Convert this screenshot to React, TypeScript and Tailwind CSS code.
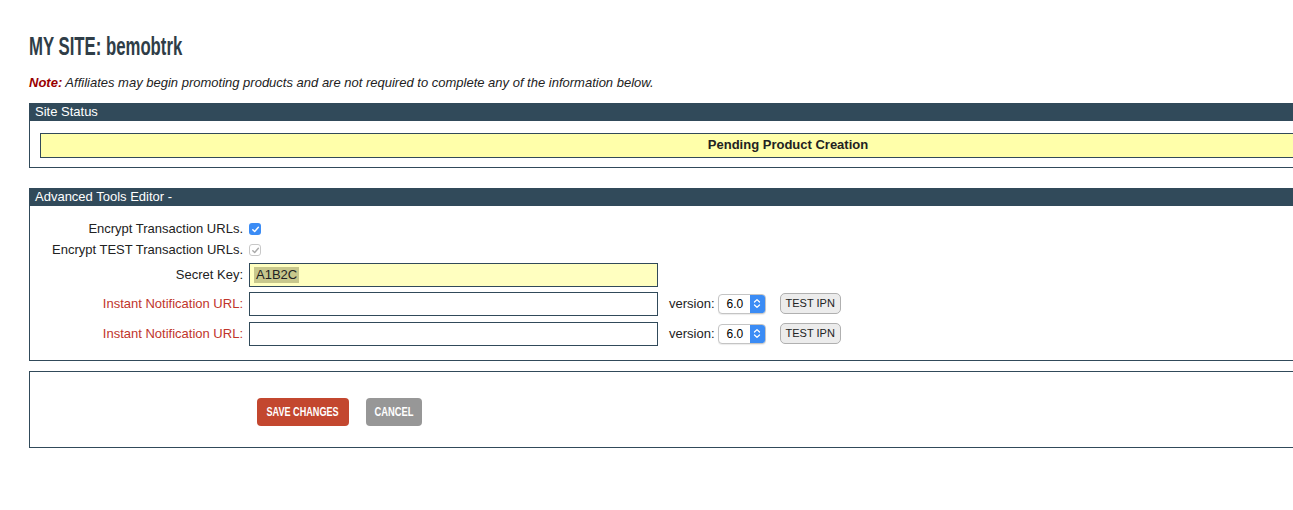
import React from 'react'

const body = { fontFamily: '"Liberation Sans", Arial, Helvetica, sans-serif' }

function Check({ disabled }: { disabled?: boolean }) {
  return (
    <span
      className={
        disabled
          ? 'inline-flex w-[12px] h-[12px] items-center justify-center rounded-[3px] border border-[#c8c8c8] bg-white'
          : 'inline-flex w-[12px] h-[12px] items-center justify-center rounded-[3px] bg-[#3b8cf5]'
      }
    >
      <svg width="9" height="9" viewBox="0 0 10 10" fill="none">
        <path
          d="M2 5.2 L4.1 7.3 L8.2 2.6"
          stroke={disabled ? '#a9a9a9' : '#ffffff'}
          strokeWidth="1.6"
          strokeLinecap="round"
          strokeLinejoin="round"
        />
      </svg>
    </span>
  )
}

function VersionSelect() {
  return (
    <div className="flex items-center h-[20px] w-[48px] rounded-[4px] border border-[#c4c4c4] bg-white shadow-[0_1px_1px_rgba(0,0,0,0.08)] overflow-hidden">
      <span className="flex-1 pl-[8px] text-[12px] text-black">6.0</span>
      <span className="flex items-center justify-center w-[15px] h-full bg-[#3b8cf5]">
        <svg width="8" height="11" viewBox="0 0 8 11" fill="none">
          <path d="M1.5 4 L4 1.6 L6.5 4" stroke="#fff" strokeWidth="1.3" strokeLinecap="round" strokeLinejoin="round" />
          <path d="M1.5 7 L4 9.4 L6.5 7" stroke="#fff" strokeWidth="1.3" strokeLinecap="round" strokeLinejoin="round" />
        </svg>
      </span>
    </div>
  )
}

function PanelHeader({ title }: { title: string }) {
  return (
    <div className="h-[18px] bg-[#314a5a] text-white text-[13px] leading-[18px] pl-[5px]">{title}</div>
  )
}

function IpnRow({ top }: { top: string }) {
  return (
    <div className={`flex items-center ${top}`}>
      <div className="w-[213px] text-right text-[#c1352b]">Instant Notification URL:</div>
      <div className="ml-[6px] w-[409px] h-[24px] border border-[#314a5a] bg-white" />
      <span className="ml-[11px] mr-[3px]">version:</span>
      <VersionSelect />
      <button className="ml-[14px] h-[21px] px-[5px] rounded-[5px] border border-[#b0b0b0] bg-[#ececec] text-[11px] text-[#222]">
        TEST IPN
      </button>
    </div>
  )
}

export default function App() {
  return (
    <div className="w-screen min-h-[510px] overflow-hidden bg-white" style={body}>
      <div className="w-[1547px] pl-[29px] pt-[31px]">
        <h1 className="text-[25px] leading-[30px] font-bold text-[#2f3d47]">
          <span className="inline-block origin-left scale-x-[0.67] whitespace-nowrap">MY SITE: bemobtrk</span>
        </h1>
        <p className="mt-[12px] text-[13px] italic text-[#222]">
          <span className="font-bold text-[#990000]">Note:</span> Affiliates may begin promoting products and are not required to complete any of the information below.
        </p>

        <div className="mt-[10px] border border-t-0 border-[#314a5a]">
          <PanelHeader title="Site Status" />
          <div className="px-[10px] pt-[12px] pb-[9px]">
            <div className="h-[25px] border border-[#314a5a] bg-[#ffffaa] flex items-center justify-center text-[13px] font-bold text-[#222]">
              Pending Product Creation
            </div>
          </div>
        </div>

        <div className="mt-[20px] border border-t-0 border-[#314a5a] pb-[14px]">
          <PanelHeader title="Advanced Tools Editor -" />
          <div className="pt-[16px] flex flex-col text-[13px] text-[#222]">
            <div className="flex items-center h-[15px]">
              <div className="w-[213px] text-right">Encrypt Transaction URLs.</div>
              <div className="pl-[6px] flex items-center"><Check /></div>
            </div>
            <div className="flex items-center h-[15px] mt-[6px]">
              <div className="w-[213px] text-right">Encrypt TEST Transaction URLs.</div>
              <div className="pl-[6px] flex items-center"><Check disabled /></div>
            </div>
            <div className="flex items-center mt-[5px]">
              <div className="w-[213px] text-right">Secret Key:</div>
              <div className="ml-[6px] w-[409px] h-[24px] border border-[#314a5a] bg-[#ffffc0] flex items-center pl-[4px]">
                <span className="bg-[#c7c78c] px-[2px] leading-[16px]">A1B2C</span>
              </div>
            </div>
            <IpnRow top="mt-[5px]" />
            <IpnRow top="mt-[6px]" />
          </div>
        </div>

        <div className="mt-[10px] h-[77px] border border-[#314a5a] flex items-start pt-[26px] pl-[227px] gap-[17px]">
          <button className="flex items-center justify-center w-[92px] h-[28px] rounded-[4px] bg-[#c3472f] text-white text-[13px] font-bold whitespace-nowrap">
            <span className="inline-block scale-x-[0.7]">SAVE CHANGES</span>
          </button>
          <button className="flex items-center justify-center w-[56px] h-[28px] rounded-[4px] bg-[#979797] text-white text-[13px] font-bold whitespace-nowrap">
            <span className="inline-block scale-x-[0.72]">CANCEL</span>
          </button>
        </div>
      </div>
    </div>
  )
}
